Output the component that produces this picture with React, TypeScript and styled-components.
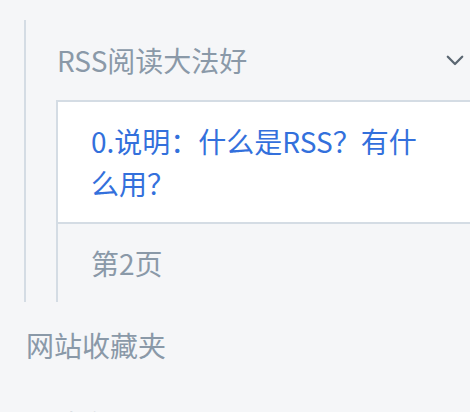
import React from "react";
import styled, { createGlobalStyle } from "styled-components";

const Global = createGlobalStyle`
  html, body {
    margin: 0;
    padding: 0;
    background: #f5f6f8;
    overflow: hidden;
  }
  body {
    font-family: "Noto Sans CJK SC", "Noto Sans", sans-serif;
  }
`;

const Sidebar = styled.nav`
  width: 470px;
  height: 412px;
  padding: 20px 0 0 24px;
  box-sizing: border-box;
  overflow: hidden;
  font-size: 28px;
  line-height: 42px;
`;

const Group = styled.div`
  border-left: 2px solid #d4dce4;
  padding-left: 30px;
`;

const GroupHeader = styled.div`
  display: flex;
  align-items: center;
  justify-content: space-between;
  padding: 19px 6px 19px 1px;
  color: #8a99a8;
`;

const SubList = styled.div`
  border-left: 2px solid #d4dce4;
`;

const SubItem = styled.div<{ $active?: boolean }>`
  padding: 18px 30px 18px 33px;
  background: ${(p) => (p.$active ? "#ffffff" : "transparent")};
  border-top: ${(p) => (p.$active ? "2px solid #d4dce4" : "none")};
  border-bottom: ${(p) => (p.$active ? "2px solid #d4dce4" : "none")};
  color: ${(p) => (p.$active ? "#3370dc" : "#8a99a8")};
`;

const TopItem = styled.div`
  padding: 22px 0 15px 2px;
  color: #8a99a8;
`;

const Chevron = () => (
  <svg width="18" height="11" viewBox="0 0 18 11" fill="none">
    <path
      d="M1.8 1.8 L9 9 L16.2 1.8"
      stroke="#5b6772"
      strokeWidth="2.3"
      strokeLinecap="round"
      strokeLinejoin="round"
    />
  </svg>
);

export default function App() {
  return (
    <>
      <Global />
      <Sidebar>
        <Group>
          <GroupHeader>
            <span>RSS阅读大法好</span>
            <Chevron />
          </GroupHeader>
          <SubList>
            <SubItem $active>0.说明：什么是RSS？有什么用？</SubItem>
            <SubItem>第2页</SubItem>
          </SubList>
        </Group>
        <TopItem>网站收藏夹</TopItem>
        <TopItem>媒体专区</TopItem>
      </Sidebar>
    </>
  );
}
